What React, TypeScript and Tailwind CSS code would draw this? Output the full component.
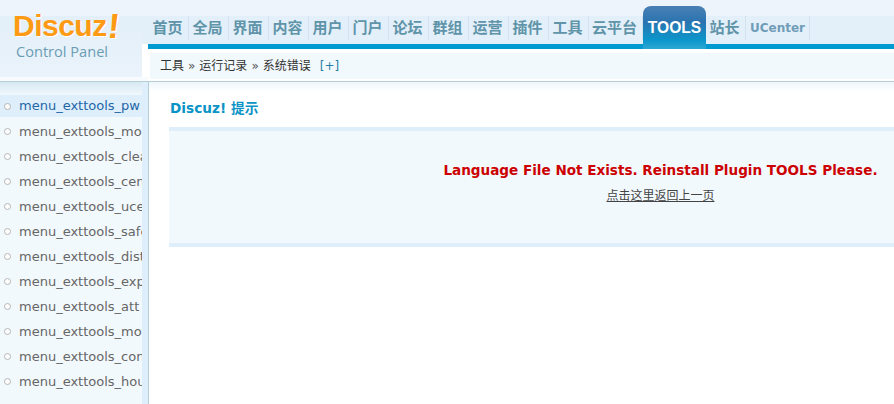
const navItems = ["首页", "全局", "界面", "内容", "用户", "门户", "论坛", "群组", "运营", "插件", "工具", "云平台"];

const menuItems = [
  "menu_exttools_pw",
  "menu_exttools_moderate",
  "menu_exttools_cleanup",
  "menu_exttools_censor",
  "menu_exttools_ucenter",
  "menu_exttools_safe",
  "menu_exttools_district",
  "menu_exttools_export",
  "menu_exttools_att",
  "menu_exttools_motion",
  "menu_exttools_convert",
  "menu_exttools_hour",
];

const cjk = "font-['DejaVu_Sans','Noto_Sans_CJK_SC',sans-serif]";

const App = () => {
  return (
    <div className={`flex h-[404px] w-[894px] overflow-hidden bg-white ${cjk}`}>
      {/* Left column */}
      <div className="flex w-[148px] shrink-0 flex-col">
        <div className="flex h-[77px] shrink-0">
          <div className="w-[142px] shrink-0 bg-[linear-gradient(#edf4fb_0,#edf4fb_16px,#e3eff9_16px,#eaf3fb_77px)] pl-[13px] pt-[10px]">
            <div className="flex h-[32px] items-end font-['Liberation_Sans',sans-serif] leading-[32px] font-bold text-[#ff9a14] [text-shadow:1px_1px_0_#fff]">
              <span className="text-[30px] tracking-[-0.5px]">Discuz</span>
              <span className="ml-[1px] -skew-x-6 text-[35px]">!</span>
            </div>
            <div className="mt-[1px] pl-[3px] font-['Open_Sans',sans-serif] text-[14.6px] leading-[16px] text-[#6a9db3]">Control Panel</div>
          </div>
          <div className="flex-1 bg-[linear-gradient(#edf4fb_0,#edf4fb_16px,#e3eff9_16px,#e3eff9_44px,#ffffff_44px)]" />
        </div>
        <div className="h-[4px] shrink-0 bg-[#f7fbfe]" />
        <div className="h-[1px] shrink-0 bg-[#b5cfd9]" />
        <div className="flex min-h-0 flex-1 bg-[linear-gradient(#d6e8f2_0,#f2f9fd_14px)]">
          <div className="min-w-0 flex-1 pt-[13px]">
            {menuItems.map((item, i) => (
              <div
                key={item}
                className={`flex items-center overflow-hidden whitespace-nowrap ${i === 0 ? "mb-[2px] h-[22px] bg-[#deeffb] text-[#2366a8]" : "h-[25px] text-[#666666]"}`}
              >
                <span className="ml-[4px] mr-[8px] h-[7px] w-[7px] shrink-0 rounded-full border border-[#b4b4b4] bg-white" />
                <span className="text-[13px] leading-[22px]">{item}</span>
              </div>
            ))}
          </div>
          <div className="w-[6px] shrink-0 bg-[#deeffb]" />
        </div>
      </div>

      {/* Right column */}
      <div className="flex min-w-0 flex-1 flex-col">
        <div className="flex h-[49px] shrink-0 items-end bg-[linear-gradient(#edf4fb_0,#edf4fb_16px,#e3eff9_16px,#e3eff9_44px,#009ad0_44px,#009ad0_49px)] pl-[1px]">
          {navItems.map((item, i) => (
            <div
              key={item}
              className={`flex h-[33px] items-start pb-[5px] ${i === 11 ? "w-[54px]" : "w-[40px]"}`}
            >
              <div className="flex h-[24px] w-full items-center justify-center border-r border-[#d3e2ec] pr-[2px] text-[15px] font-bold text-[#5f94a9]">
                {item}
              </div>
            </div>
          ))}
          <div className="flex h-[43px] w-[63px] items-center justify-center rounded-t-[8px] bg-[linear-gradient(#4a80b4_0,#2a74b0_16px,#0b96cb_34px,#2ea7d3_43px)] font-['Liberation_Sans',sans-serif] text-[15.6px] font-bold text-white">
            TOOLS
          </div>
          <div className="flex h-[33px] w-[40px] items-start">
            <div className="flex h-[24px] w-full items-center justify-center border-r border-[#d3e2ec] pr-[2px] text-[15px] font-bold text-[#5f94a9]">
              站长
            </div>
          </div>
          <div className="flex h-[33px] w-[64px] items-start">
            <div className="flex h-[24px] w-full items-center justify-center border-r border-[#d3e2ec] text-[12px] font-bold text-[#6f9db8]">
              UCenter
            </div>
          </div>
        </div>
        <div className="h-[4px] shrink-0 bg-white" />
        <div className="ml-[2px] flex h-[26px] shrink-0 items-center bg-[#f2f9fd] pl-[10px] text-[12px] text-[#333333]">
          <span>工具</span>
          <span className="mx-[4px] text-[#555555]">»</span>
          <span>运行记录</span>
          <span className="mx-[4px] text-[#555555]">»</span>
          <span>系统错误</span>
          <span className="ml-[9px] text-[#2a7fa8]">[+]</span>
        </div>
        <div className="h-[2px] shrink-0 bg-white" />
        <div className="h-[1px] shrink-0 bg-[#b5cfd9]" />

        <div className="min-h-0 flex-1 border-l border-[#b5cfd9]">
          <div className="h-[10px] bg-[linear-gradient(#eef6fa,#ffffff)]" />
          <div className="pl-[21px] pt-[7px]">
            <div className="h-[18px] text-[13.7px] leading-[18px] font-bold text-[#0b93c6]">Discuz! 提示</div>
          </div>
          <div className="mt-[10px] ml-[20px] h-[120px] border-y-[4px] border-[#deeffb] bg-[#f2f9fd] pt-[30px] pl-[258px]">
            <div className="flex flex-col items-center">
              <div className="whitespace-nowrap text-[13.55px] leading-[18px] font-bold text-[#cc0000]">
                Language File Not Exists. Reinstall Plugin TOOLS Please.
              </div>
              <div className="mt-[9px] text-[12px] leading-[16px] text-[#444444] underline">点击这里返回上一页</div>
            </div>
          </div>
        </div>
      </div>
    </div>
  );
};

export default App;
